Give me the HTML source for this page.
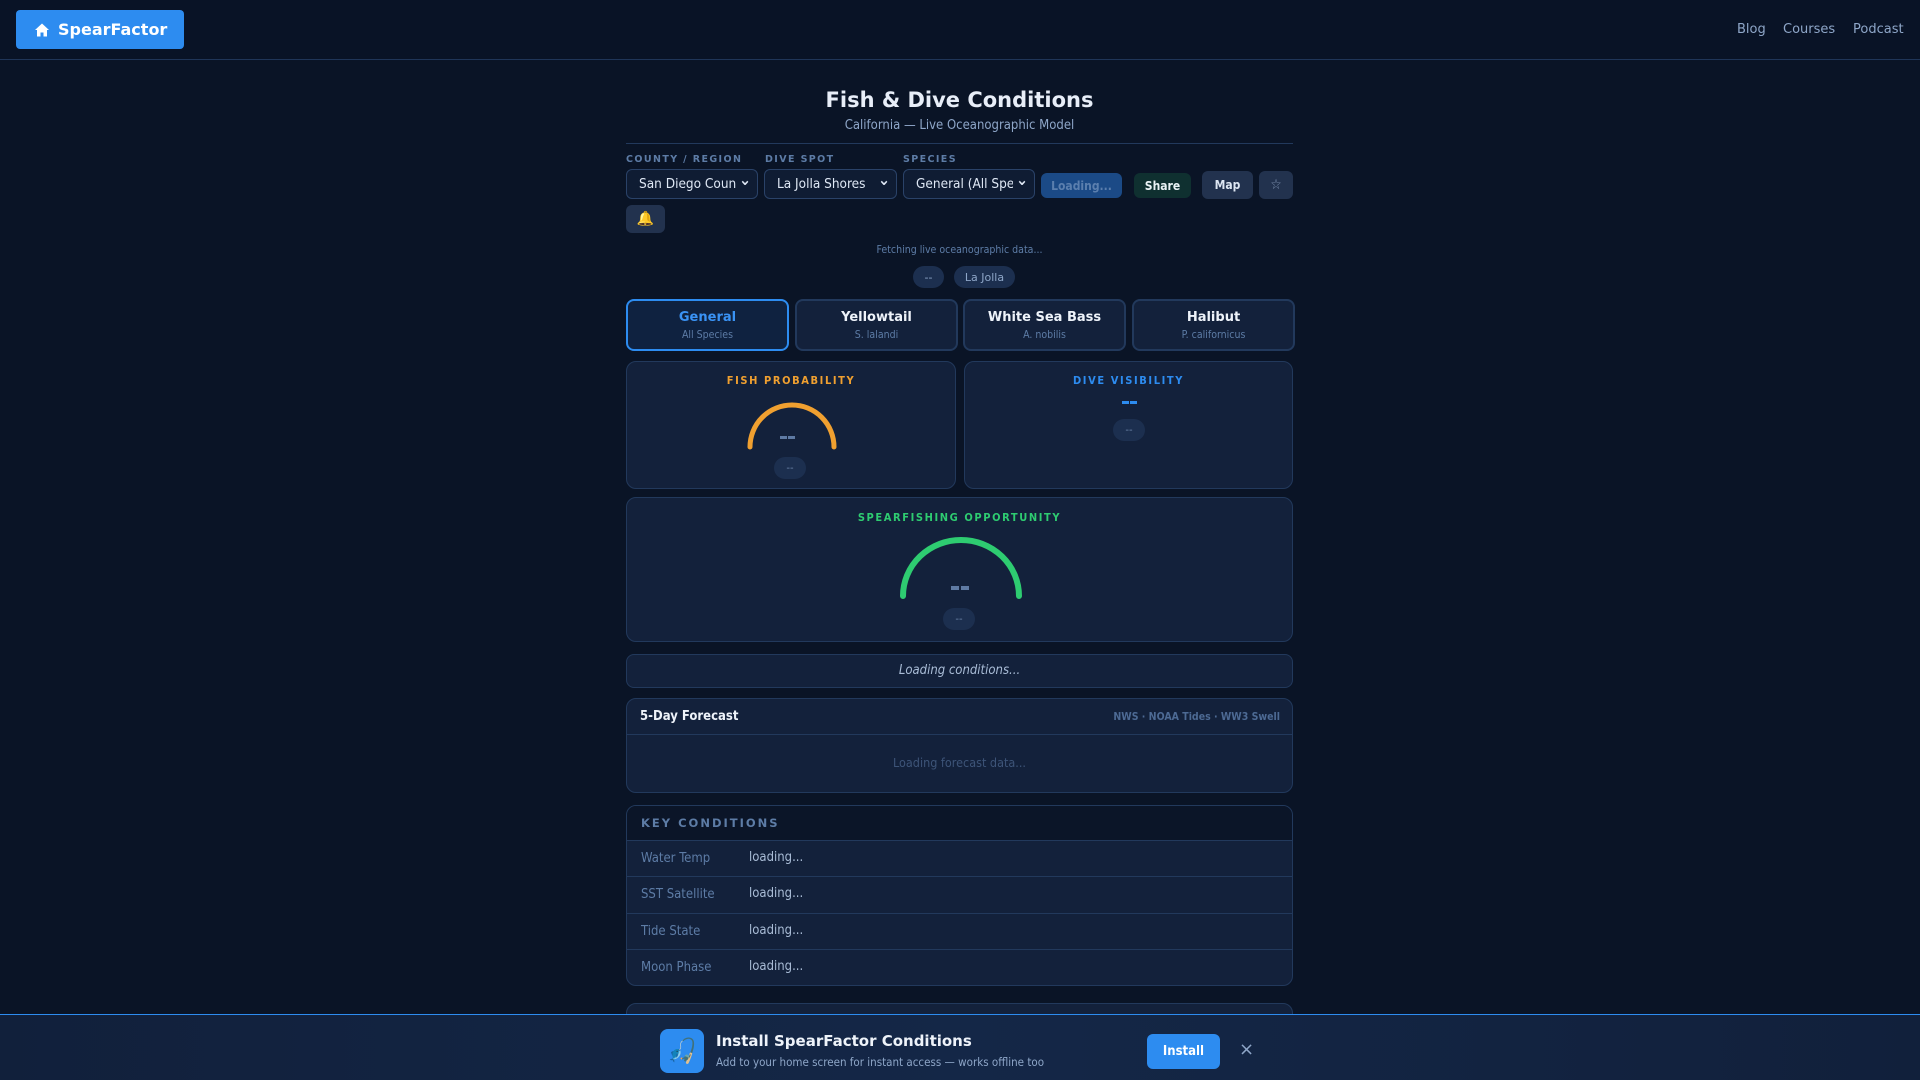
<!DOCTYPE html>
<html><head><meta charset="utf-8"><style>
*{box-sizing:border-box;margin:0;padding:0}
body{width:1920px;height:1080px;overflow:hidden;background:#0a1426;font-family:"DejaVu Sans","Liberation Sans",sans-serif;color:#e6edf7;position:relative}
.hdr{position:absolute;left:0;top:0;width:1920px;height:60px;border-bottom:1px solid #1f3558;background:#091326}
.logo{position:absolute;left:16px;top:10px;width:168px;height:39px;background:#2d8cf0;border-radius:4px;color:#fff;font-weight:bold;font-size:16px;display:flex;align-items:center;padding-left:18px;gap:8px}
.nav{position:absolute;top:22px;font-size:13px;color:#8ea6c8}
.abs{position:absolute}
.c{text-align:center}
.card{position:absolute;background:#13213b;border:1.5px solid #22395c;border-radius:10px}
.lbl{position:absolute;font-size:9.5px;font-weight:bold;letter-spacing:1.4px;color:#5d7ca6}
.sel{position:absolute;top:169px;height:30px;border:1px solid #2a4268;border-radius:6px;background:#0f1c33;color:#dfe8f5;font-family:"DejaVu Sans Condensed","DejaVu Sans",sans-serif;font-size:13.5px;padding:6px 12px;white-space:nowrap;overflow:hidden}
.sel:after{content:"⌄";position:absolute;right:6px;top:0px;font-size:16px;font-weight:bold;background:#0f1c33;padding-left:3px}
.btn{position:absolute;border-radius:6px;font-size:12px;font-weight:bold;display:flex;align-items:center;justify-content:center;font-family:"DejaVu Sans Condensed","DejaVu Sans",sans-serif}
.pill{position:absolute;top:266px;height:22px;border-radius:11px;background:#1c2f4f;color:#8ea6c8;font-size:11px;display:flex;align-items:center;justify-content:center}
.tab{position:absolute;top:299px;width:163px;height:52px;text-align:center;border-radius:8px;background:#13213b;border:2px solid #22395c}
.tab b{display:block;font-size:13px;margin-top:9px;color:#eef3fa}
.tab span{display:block;font-size:10.5px;color:#5d7ca6;margin-top:4px;font-family:"DejaVu Sans Condensed","DejaVu Sans",sans-serif}
.gt{position:absolute;width:100%;text-align:center;font-size:11px;font-weight:bold;letter-spacing:1.6px;font-family:"DejaVu Sans Condensed","DejaVu Sans",sans-serif}
.small{position:absolute;width:32px;height:22px;border-radius:11px;background:#1c2f4f;color:#6d86aa;font-size:10px;display:flex;align-items:center;justify-content:center}
.row{position:absolute;left:0;width:100%;height:36px;border-top:1px solid #22395c;font-size:13px;font-family:"DejaVu Sans Condensed","DejaVu Sans",sans-serif}
.row .k{position:absolute;left:14px;top:10px;color:#5d7ca6}
.row .v{position:absolute;left:122px;top:9px;color:#a9bcd6}
</style></head><body>
<div class="hdr">
<div class="logo"><svg width="16" height="16" viewBox="0 0 16 16"><path d="M8 1.5L1 8h2v6.5h3.5v-4h3v4H13V8h2z" fill="#fff"/></svg>SpearFactor</div>
<div class="nav" style="left:1737px">Blog</div>
<div class="nav" style="left:1783px">Courses</div>
<div class="nav" style="left:1853px">Podcast</div>
</div>

<div class="abs c" style="left:626px;width:667px;top:88px;font-size:21px;font-weight:bold;color:#e8eef8">Fish &amp; Dive Conditions</div>
<div class="abs c" style="left:626px;width:667px;top:118px;font-size:13px;color:#8ea6c8;font-family:'DejaVu Sans Condensed','DejaVu Sans',sans-serif">California — Live Oceanographic Model</div>
<div class="abs" style="left:626px;width:667px;top:143px;height:1px;background:#22395c"></div>

<div class="lbl" style="left:626px;top:154px">COUNTY / REGION</div>
<div class="lbl" style="left:765px;top:154px">DIVE SPOT</div>
<div class="lbl" style="left:903px;top:154px">SPECIES</div>
<div class="sel" style="left:626px;width:132px">San Diego Coun</div>
<div class="sel" style="left:764px;width:133px">La Jolla Shores</div>
<div class="sel" style="left:903px;width:132px">General (All Spe</div>
<div class="btn" style="left:1041px;top:173px;width:81px;height:25px;background:#1b4a86;color:#5b7fae">Loading...</div>
<div class="btn" style="left:1134px;top:173px;width:57px;height:25px;background:#0f3030;color:#e9f2f5">Share</div>
<div class="btn" style="left:1202px;top:171px;width:51px;height:28px;background:#22324e;color:#dde6f2">Map</div>
<div class="btn" style="left:1259px;top:171px;width:34px;height:28px;background:#22324e;color:#7f93b2;font-size:14px;font-weight:normal">☆</div>
<div class="btn" style="left:626px;top:205px;width:39px;height:28px;background:#22324e;font-size:14px">🔔</div>

<div class="abs c" style="left:626px;width:667px;top:244px;font-size:10.5px;color:#5d7ca6;font-family:'DejaVu Sans Condensed','DejaVu Sans',sans-serif">Fetching live oceanographic data...</div>
<div class="pill" style="left:913px;width:31px">--</div>
<div class="pill" style="left:954px;width:61px">La Jolla</div>

<div class="tab" style="left:626px;border-color:#2d8cf0;background:#0f2240"><b style="color:#3a93f5">General</b><span>All Species</span></div>
<div class="tab" style="left:795px"><b>Yellowtail</b><span>S. lalandi</span></div>
<div class="tab" style="left:963px"><b>White Sea Bass</b><span>A. nobilis</span></div>
<div class="tab" style="left:1132px"><b>Halibut</b><span>P. californicus</span></div>

<div class="card" style="left:626px;top:361px;width:330px;height:128px">
<div class="gt" style="top:12px;color:#f0a030">FISH PROBABILITY</div>
<svg class="abs" style="left:118px;top:36px" width="94" height="54" viewBox="0 0 94 54"><path d="M5 49A42 42 0 0 1 89 49" fill="none" stroke="#f0a030" stroke-width="5" stroke-linecap="round"/><rect x="35" y="38" width="7" height="3" fill="#5e7aa3"/><rect x="43" y="38" width="7" height="3" fill="#5e7aa3"/></svg>
<div class="small" style="left:147px;top:95px">--</div>
</div>
<div class="card" style="left:964px;top:361px;width:329px;height:128px">
<div class="gt" style="top:12px;color:#2d8cf0">DIVE VISIBILITY</div>
<div class="abs" style="left:157px;top:39px;width:7px;height:3px;background:#2d8cf0"></div>
<div class="abs" style="left:165px;top:39px;width:7px;height:3px;background:#2d8cf0"></div>
<div class="small" style="left:148px;top:57px">--</div>
</div>

<div class="card" style="left:626px;top:497px;width:667px;height:145px">
<div class="gt" style="top:13px;color:#2ecc71">SPEARFISHING OPPORTUNITY</div>
<svg class="abs" style="left:271px;top:38px" width="126" height="66" viewBox="0 0 126 66"><path d="M5 60A58 56 0 0 1 121 60" fill="none" stroke="#2ecc71" stroke-width="6" stroke-linecap="round"/><rect x="53" y="50" width="8" height="4" fill="#5e7aa3"/><rect x="63" y="50" width="8" height="4" fill="#5e7aa3"/></svg>
<div class="small" style="left:316px;top:110px">--</div>
</div>

<div class="card" style="left:626px;top:654px;width:667px;height:34px;border-radius:8px;text-align:center;font-size:13px;font-style:italic;color:#a9bcd6;padding-top:8px;font-family:'DejaVu Sans Condensed','DejaVu Sans',sans-serif">Loading conditions...</div>

<div class="card" style="left:626px;top:698px;width:667px;height:95px">
<div class="abs" style="left:13px;top:10px;font-size:13px;font-weight:bold;color:#eef3fa;font-family:'DejaVu Sans Condensed','DejaVu Sans',sans-serif">5-Day Forecast</div>
<div class="abs" style="right:12px;top:12px;font-size:10.5px;font-weight:bold;color:#4d6a94;font-family:'DejaVu Sans Condensed','DejaVu Sans',sans-serif">NWS · NOAA Tides · WW3 Swell</div>
<div class="abs" style="left:0;top:35px;width:100%;height:1px;background:#22395c"></div>
<div class="abs c" style="left:0;width:100%;top:56px;font-size:12.5px;color:#3d5478;font-family:'DejaVu Sans Condensed','DejaVu Sans',sans-serif">Loading forecast data...</div>
</div>

<div class="card" style="left:626px;top:805px;width:667px;height:181px;overflow:hidden">
<div class="abs" style="left:0;top:0;width:100%;height:34px;background:#0b1528"></div>
<div class="abs" style="left:14px;top:10px;font-size:11.5px;font-weight:bold;letter-spacing:2px;color:#5d7ca6">KEY CONDITIONS</div>
<div class="row" style="top:34px"><span class="k">Water Temp</span><span class="v">loading...</span></div>
<div class="row" style="top:70px"><span class="k">SST Satellite</span><span class="v">loading...</span></div>
<div class="row" style="top:107px"><span class="k">Tide State</span><span class="v">loading...</span></div>
<div class="row" style="top:143px"><span class="k">Moon Phase</span><span class="v">loading...</span></div>
</div>
<div class="card" style="left:626px;top:1003px;width:667px;height:60px"></div>

<div class="abs" style="left:0;top:1014px;width:1920px;height:66px;background:linear-gradient(90deg,#11203b,#142747 50%,#11203b);border-top:1.5px solid #2d8cf0">
<div class="abs" style="left:660px;top:14px;width:44px;height:44px;border-radius:8px;background:#2d8cf0;font-size:24px;display:flex;align-items:center;justify-content:center">🎣</div>
<div class="abs" style="left:716px;top:17px;font-size:15px;font-weight:bold;color:#eef3fa">Install SpearFactor Conditions</div>
<div class="abs" style="left:716px;top:40px;font-size:11.5px;color:#8ea6c8;font-family:'DejaVu Sans Condensed','DejaVu Sans',sans-serif">Add to your home screen for instant access — works offline too</div>
<div class="btn" style="left:1147px;top:19px;width:73px;height:35px;background:#2d8cf0;color:#fff;font-size:13px;border-radius:6px">Install</div>
<div class="abs" style="left:1239px;top:24px;font-size:18px;color:#8ea6c8">×</div>
</div>
</body></html>
